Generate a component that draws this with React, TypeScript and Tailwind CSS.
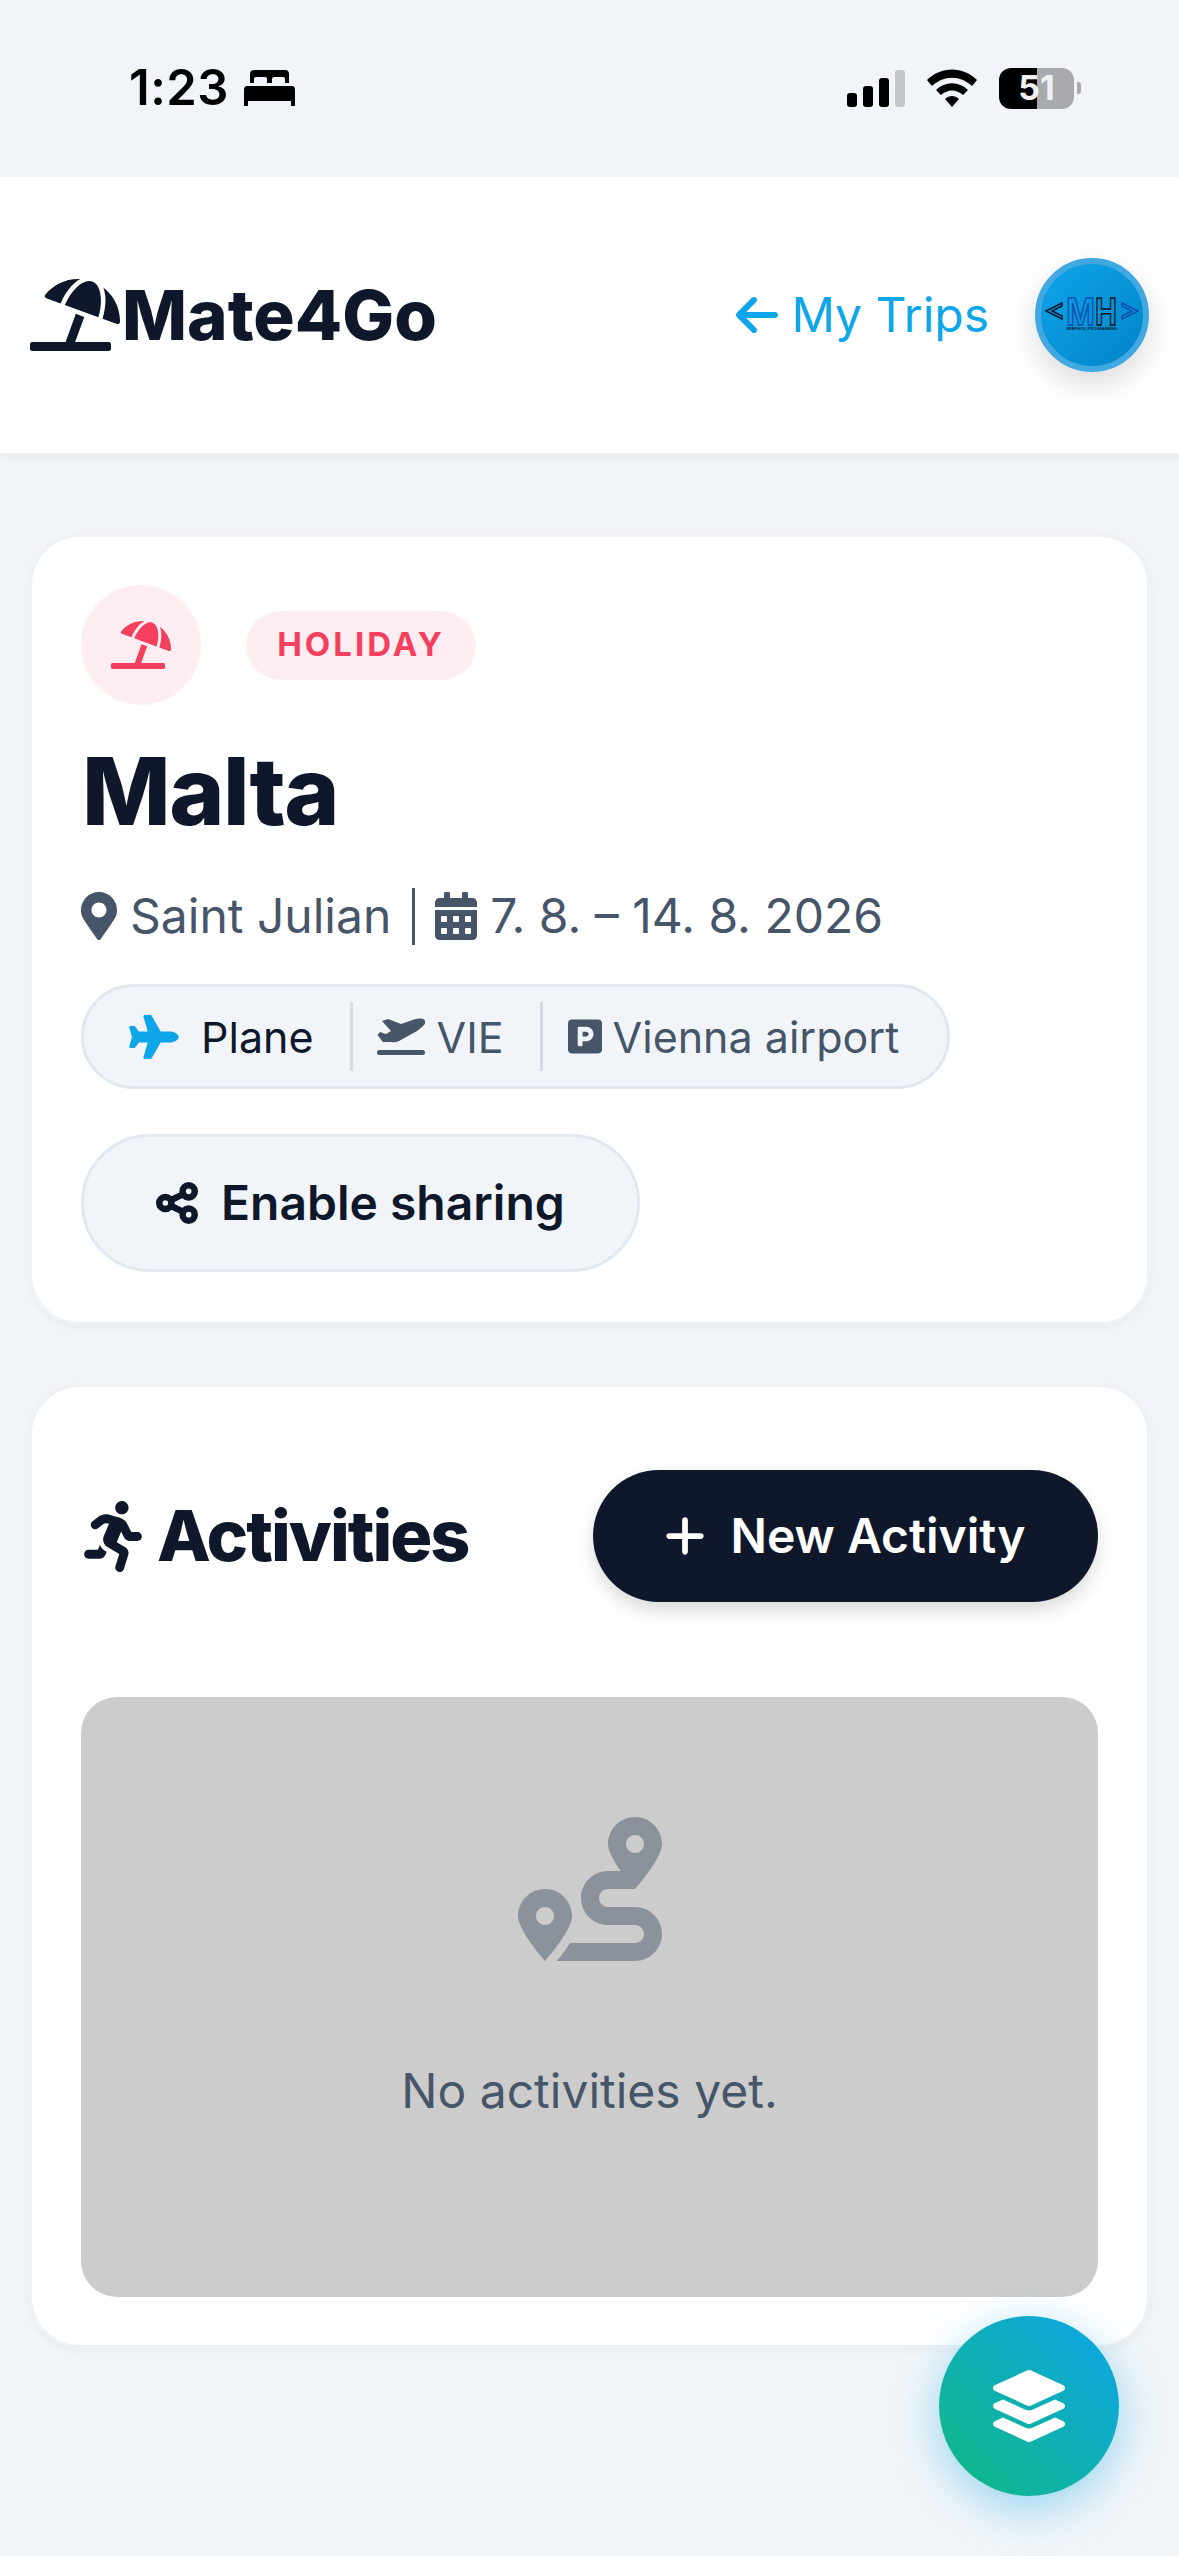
import React from "react";
import {
  FaCalendarAlt,
  FaLayerGroup,
  FaMapMarkerAlt,
  FaParking,
  FaPlane,
  FaRoute,
  FaRunning,
  FaUmbrellaBeach,
} from "react-icons/fa";
import { FaArrowLeft, FaPlus } from "react-icons/fa6";

const StatusBar = () => (
  <div className="h-[177px] flex justify-between items-start pt-[67px] pl-[129px] pr-[98px] font-['Inter',sans-serif]">
    <div className="flex items-center gap-[15px] h-[42px] text-[49px] font-semibold tracking-[0.5px] text-black">
      <span>1:23</span>
      <svg viewBox="0 0 51 36" className="w-[51px] h-[36px]">
        <path d="M6 4 Q6 0 10 0 H41 Q45 0 45 4 V13 H41 V9 Q41 7 39 7 H30 Q28 7 28 9 V13 H23 V9 Q23 7 21 7 H12 Q10 7 10 9 V13 H6 Z" fill="#000" />
        <path d="M3 16 H48 Q51 16 51 20 V36 H47 V31 H4 V36 H0 V20 Q0 16 3 16 Z" fill="#000" />
      </svg>
    </div>
    <div className="flex items-center h-[42px]">
      <div className="flex items-end gap-[6px] mr-[22px] h-[37px]">
        <div className="w-[10px] h-[14px] bg-black rounded-[3px]" />
        <div className="w-[10px] h-[21px] bg-black rounded-[3px]" />
        <div className="w-[10px] h-[29px] bg-black rounded-[3px]" />
        <div className="w-[10px] h-[37px] bg-[#c2c6ca] rounded-[3px]" />
      </div>
      <svg viewBox="0 0 50 38" className="w-[50px] h-[38px] mr-[22px]">
        <path d="M0 11 C14 -3 36 -3 50 11 L45 17 C33 6 17 6 5 17 Z" fill="#000" />
        <path d="M9 21 C18 12 32 12 41 21 L36 26 C29 20 21 20 14 26 Z" fill="#000" />
        <path d="M18 30 C22 26 28 26 32 30 L25 38 Z" fill="#000" />
      </svg>
      <div className="w-[75px] h-[41px] rounded-[12px] flex items-center justify-center text-[34px] font-bold text-[#f1f1f1] leading-none bg-[linear-gradient(90deg,#000_51%,#a9aaad_51%)]">
        51
      </div>
      <div className="w-[4px] h-[12px] ml-[3px] rounded-r-[3px] bg-[#a9aaad]" />
    </div>
  </div>
);

const Avatar = () => (
  <div className="w-[114px] h-[114px] rounded-full border-[6px] border-[#42a8e2] bg-gradient-to-br from-[#0ea5e9] to-[#0284c7] shadow-[0_12px_30px_rgba(0,0,0,0.14)]">
    <svg viewBox="0 0 102 102" className="w-[102px] h-[102px]">
      <path d="M21 39 L5 47 L21 55 V52 L11 47 L21 42 Z" fill="none" stroke="#0f172a" strokeWidth="1.5" />
      <path d="M81 39 L97 47 L81 55 V52 L91 47 L81 42 Z" fill="none" stroke="#0a4fb0" strokeWidth="1.5" />
      <text x="25" y="61" fontFamily="Liberation Sans" fontWeight="700" fontSize="39" textLength="29" lengthAdjust="spacingAndGlyphs" fill="none" stroke="#0a4fb0" strokeWidth="1.5">M</text>
      <text x="54" y="61" fontFamily="Liberation Sans" fontWeight="700" fontSize="39" textLength="22" lengthAdjust="spacingAndGlyphs" fill="none" stroke="#0b1220" strokeWidth="1.5">H</text>
      <text x="25" y="66" fontFamily="Liberation Sans" fontWeight="700" fontSize="3.5" textLength="51" lengthAdjust="spacingAndGlyphs" fill="#0f172a">GRAPHICS | PROGRAMMING</text>
    </svg>
  </div>
);

const Header = () => (
  <header className="h-[279px] bg-white border-b-[3px] border-[#eff0f2] shadow-[0_3px_9px_rgba(0,0,0,0.03)] flex items-center justify-between pl-[30px] pr-[30px]">
    <div className="flex items-center">
      <FaUmbrellaBeach className="w-[90px] h-[72px] text-[#0f172a]" />
      <span className="ml-[2px] text-[69px] leading-none font-extrabold text-[#0f172a]">Mate4Go</span>
    </div>
    <div className="flex items-center gap-[46px]">
      <div className="flex items-center gap-[13px] text-[#0ea5e9] text-[48px]">
        <FaArrowLeft className="w-[48px] h-[48px] mr-[-3px]" />
        <span>My Trips</span>
      </div>
      <Avatar />
    </div>
  </header>
);

const TripCard = () => (
  <section className="rounded-[51px] bg-white border-[3px] border-[#eff1f4] shadow-[0_3px_9px_rgba(0,0,0,0.04)] px-[49px] pt-[48px] pb-[50px]">
    <div className="flex items-center gap-[45px]">
      <div className="w-[120px] h-[120px] rounded-full bg-[#feeef2] flex items-center justify-center">
        <FaUmbrellaBeach className="w-[60px] h-[48px] text-[#f43f5e]" />
      </div>
      <span className="w-[230px] h-[69px] rounded-full bg-[#feeef2] text-[#f43f5e] text-[33px] font-bold tracking-[3px] flex items-center justify-center">HOLIDAY</span>
    </div>
    <h1 className="mt-[26px] ml-[1px] text-[94px] leading-[120px] font-extrabold tracking-[-1.5px] text-[#0f172a]">Malta</h1>
    <div className="mt-[29px] flex items-center text-[#475569] text-[48px] leading-[72px]">
      <FaMapMarkerAlt className="w-[36px] h-[48px]" />
      <span className="ml-[13px]">Saint Julian</span>
      <span className="ml-[21px] w-[3px] h-[57px] bg-[#475569]" />
      <FaCalendarAlt className="ml-[20px] w-[42px] h-[48px]" />
      <span className="ml-[13px]">7. 8. – 14. 8. 2026</span>
    </div>
    <div className="mt-[32px] w-fit h-[105px] rounded-full bg-[#f1f5f9] border-[3px] border-[#e2e8f0] pl-[45px] pr-[48px] flex items-center text-[43px] leading-[60px]">
      <FaPlane className="w-[50px] h-[44px] text-[#0ea5e9]" />
      <span className="ml-[22px] text-[#0f172a]">Plane</span>
      <span className="ml-[36px] w-[3px] h-[69px] bg-[#d5dbe3]" />
      <svg viewBox="0 0 48 37" className="ml-[24px] w-[48px] h-[37px] text-[#475569]" fill="currentColor">
        <path d="M5 3 L11 1 L24 6 L37 1.5 Q45 -0.5 47.5 2 Q49.5 5 46 8 Q44 10 40 13 L22 23 Q18 25 14 24 L6 24 L0.5 17 L3 14 L9 16 L14 13 Z" />
        <rect x="0" y="32" width="48" height="5" rx="2.5" />
      </svg>
      <span className="ml-[12px] text-[#475569]">VIE</span>
      <span className="ml-[36px] w-[3px] h-[69px] bg-[#d5dbe3]" />
      <FaParking className="ml-[25px] w-[34px] h-[39px] text-[#475569]" />
      <span className="ml-[11px] text-[#475569]">Vienna airport</span>
    </div>
    <button className="mt-[45px] h-[138px] w-[559px] rounded-full bg-[#f1f5f9] border-[3px] border-[#e2e8f0] flex items-center pl-[65px] gap-[16px] text-[48px] font-semibold text-[#0f172a]">
      <svg viewBox="0 0 24 24" className="w-[56px] h-[56px]" fill="none" stroke="currentColor" strokeWidth="2.8" strokeLinecap="round">
        <circle cx="17" cy="7" r="2.6" />
        <circle cx="7" cy="12" r="2.6" />
        <circle cx="17" cy="17" r="2.6" />
        <path d="M9.5 13.3 L14.5 15.7 M14.5 8.3 L9.5 10.7" />
      </svg>
      Enable sharing
    </button>
  </section>
);

const ActivitiesCard = () => (
  <section className="mt-[59px] rounded-[51px] bg-white border-[3px] border-[#eff1f4] shadow-[0_3px_9px_rgba(0,0,0,0.04)] px-[49px] pt-[83px] pb-[48px]">
    <div className="flex items-center justify-between">
      <div className="flex items-center gap-[15px] ml-[3px] text-[#0f172a]">
        <FaRunning className="w-[58px] h-[71px]" />
        <h2 className="text-[70px] leading-none font-extrabold tracking-[-2px]">Activities</h2>
      </div>
      <button className="w-[505px] h-[132px] rounded-full bg-[#0f172a] shadow-[0_9px_18px_rgba(0,0,0,0.14)] flex items-center justify-center gap-[22px] pr-[3px] text-white text-[48px] font-semibold">
        <FaPlus className="w-[46px] h-[46px]" />
        New Activity
      </button>
    </div>
    <div className="mt-[95px] h-[600px] rounded-[36px] bg-[#cccccc] flex flex-col items-center pt-[120px]">
      <FaRoute className="w-[144px] h-[144px] text-[#8b929b]" />
      <p className="mt-[94px] text-[48px] leading-[72px] text-[#475569]">No activities yet.</p>
    </div>
  </section>
);

export default function App() {
  return (
    <div className="relative w-[1179px] h-[2556px] overflow-hidden bg-[#f1f5f9] font-['Inter',sans-serif]">
      <StatusBar />
      <Header />
      <main className="px-[29px] pt-[78px]">
        <TripCard />
        <ActivitiesCard />
      </main>
      {/* floating button sits over the page */}
      <button className="absolute left-[939px] top-[2316px] w-[180px] h-[180px] rounded-full bg-[linear-gradient(45deg,#10b981,#0ea5e9)] shadow-[0_12px_45px_rgba(14,165,233,0.4)] flex items-center justify-center">
        <FaLayerGroup className="w-[72px] h-[72px] text-white" />
      </button>
    </div>
  );
}
